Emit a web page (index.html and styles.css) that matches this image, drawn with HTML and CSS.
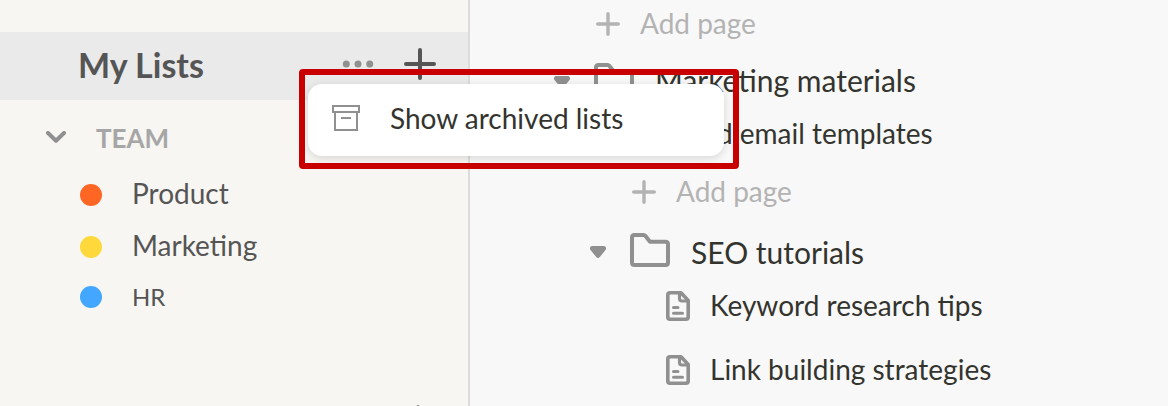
FILE: index.html
```html
<!DOCTYPE html>
<html lang="en">
<head>
<meta charset="utf-8">
<title>My Lists</title>
<link rel="stylesheet" href="styles.css">
</head>
<body>
<svg class="defs" aria-hidden="true">
  <symbol id="plus" viewBox="0 0 24 24"><path d="M12 1.700v20.600M1.700 12h20.600" fill="none" stroke="currentColor" stroke-width="3.400" stroke-linecap="round"/></symbol>
  <symbol id="caret" viewBox="0 0 16 12"><path d="M2.500 0h11A2.400 2.400 0 0 1 15.300 4.200L9.800 11Q8 13 6.200 11L.7 4.200A2.400 2.400 0 0 1 2.500 0z" fill="currentColor"/></symbol>
  <symbol id="folder" viewBox="0 0 40 34"><path d="M4.500 2h9.200q1 0 1.600.8L20 8.700h15.500Q38 8.700 38 11.200V29.500Q38 32 35.500 32h-31Q2 32 2 29.500v-25Q2 2 4.500 2z" fill="none" stroke="currentColor" stroke-width="4" stroke-linejoin="round"/></symbol>
  <symbol id="file" viewBox="0 0 24 30"><path d="M4 1.800h11L22.200 9.500V26q0 2.200-2.200 2.200H4Q1.800 28.200 1.800 26V4Q1.800 1.800 4 1.800z" fill="none" stroke="currentColor" stroke-width="3.600" stroke-linejoin="round"/><path d="M13.500 2v5.500q0 2.500 2.500 2.500h6" fill="none" stroke="currentColor" stroke-width="3.200"/><path d="M7.500 16.500h4.500M7.500 22.300h9" fill="none" stroke="currentColor" stroke-width="3" stroke-linecap="round"/></symbol>
</svg>
<div class="app">
  <aside class="sidebar">
    <header class="lists-header">
      <h1 class="lists-title">My Lists</h1>
      <button class="icon-button" aria-label="List options">
        <svg width="32" height="8" viewBox="0 0 32 8" fill="currentColor"><circle cx="4.300" cy="4" r="3.500"/><circle cx="16" cy="4" r="3.500"/><circle cx="27.700" cy="4" r="3.500"/></svg>
      </button>
      <button class="icon-button icon-button-dark" aria-label="Add list">
        <svg width="32" height="32" viewBox="0 0 32 32"><path d="M16 2v28M2 16h28" stroke="currentColor" stroke-width="4" stroke-linecap="round"/></svg>
      </button>
    </header>
    <button class="team-toggle" aria-expanded="true">
      <svg width="20" height="12" viewBox="0 0 20 12"><path d="M2 2l8 7.700L18 2" fill="none" stroke="currentColor" stroke-width="4" stroke-linecap="round" stroke-linejoin="round"/></svg>
      <span>TEAM</span>
    </button>
    <nav class="lists">
      <a class="list-link" href="#product"><span class="dot dot-orange"></span>Product</a>
      <a class="list-link" href="#marketing"><span class="dot dot-yellow"></span>Marketing</a>
      <a class="list-link list-link-small" href="#hr"><span class="dot dot-blue"></span>HR</a>
    </nav>
    <div class="next-section">
      <button class="icon-button" aria-label="Add item"><svg width="24" height="24"><use href="#plus"/></svg></button>
    </div>
  </aside>

  <main class="tree">
    <button class="row row-add"><svg width="24" height="24"><use href="#plus"/></svg>Add page</button>
    <section class="group">
      <div class="row row-folder row-folder-top">
        <button class="icon-button" aria-label="Collapse Marketing materials"><svg width="16" height="12"><use href="#caret"/></svg></button>
        <svg class="folder" width="40" height="34"><use href="#folder"/></svg>
        <a class="row-link" href="#marketing-materials">Marketing materials</a>
      </div>
      <div class="children">
        <a class="row row-page" href="#email-templates"><svg width="24" height="30"><use href="#file"/></svg>Cold email templates</a>
        <button class="row row-add"><svg width="24" height="24"><use href="#plus"/></svg>Add page</button>
        <section class="group group-nested">
          <div class="row row-folder">
            <button class="icon-button" aria-label="Collapse SEO tutorials"><svg width="16" height="12"><use href="#caret"/></svg></button>
            <svg class="folder" width="40" height="34"><use href="#folder"/></svg>
            <a class="row-link" href="#seo">SEO tutorials</a>
          </div>
          <div class="children">
            <a class="row row-page" href="#keywords"><svg width="24" height="30"><use href="#file"/></svg>Keyword research tips</a>
            <a class="row row-page" href="#links"><svg width="24" height="30"><use href="#file"/></svg>Link building strategies</a>
          </div>
        </section>
      </div>
    </section>
  </main>

  <div class="callout">
    <div class="menu" role="menu">
      <button class="menu-item" role="menuitem">
        <svg width="28" height="26" viewBox="0 0 28 26" fill="none" stroke="currentColor" stroke-width="2"><path d="M1 1h26v6H1zM3 7v18h22V7M9 13h10"/></svg>
        Show archived lists
      </button>
    </div>
  </div>
</div>
</body>
</html>
```
FILE: styles.css
```css
* { box-sizing: border-box; }

body {
  margin: 0;
  font-family: Lato, "Open Sans", sans-serif;
  font-size: 28px;
  line-height: 36px;
  color: #34342f;
  background: #f8f8f8;
}

button {
  padding: 0;
  border: 0;
  background: none;
  font: inherit;
  color: inherit;
  text-align: left;
  cursor: pointer;
}

a { color: inherit; text-decoration: none; }
svg { display: block; flex: none; }
.defs { position: absolute; width: 0; height: 0; }

.app {
  position: relative;
  display: grid;
  grid-template-columns: 470px 1fr;
  height: 100vh;
  overflow: hidden;
}

.sidebar {
  padding-top: 32px;
  overflow: hidden;
  background: #f7f6f2;
  border-right: 2px solid #dcdcdc;
}

.lists-header {
  display: flex;
  align-items: center;
  gap: 30px;
  height: 68px;
  padding: 0 32px 4px 78px;
  background: #eaeaea;
}

.lists-title {
  flex: 1;
  margin: 0;
  padding-top: 2px;
  font-size: 34px;
  line-height: 40px;
  font-weight: 700;
  color: #555;
}

.icon-button { flex: none; color: #909090; }
.icon-button-dark { color: #555; }

.team-toggle {
  display: flex;
  align-items: center;
  gap: 30px;
  width: 100%;
  height: 68px;
  padding: 8px 0 0 46px;
  font-size: 26px;
  font-weight: 700;
  color: #a6a6a6;
}

.team-toggle svg { margin-bottom: 2px; color: #909090; }

.list-link {
  display: flex;
  align-items: center;
  gap: 30px;
  height: 52px;
  padding: 0 0 2px 80px;
  color: #555;
}

.dot { width: 22px; height: 22px; margin-top: 4px; border-radius: 50%; }
.dot-orange { background: #ff6624; }
.dot-yellow { background: #ffd93b; }
.dot-blue { background: #43a6ff; }

.list-link-small { font-size: 24px; }
.list-link-small .dot { margin-top: 0; }

.next-section {
  display: flex;
  justify-content: flex-end;
  padding: 81px 38px 0 0;
}

.tree { padding-left: 126px; color: #34342f; }

.row { display: flex; align-items: center; padding-bottom: 2px; }
.row-add { gap: 20px; height: 48px; color: #b3b3b3; }
.row-page { gap: 20px; height: 64px; }
.row-folder { height: 42px; font-size: 30px; }
.row svg { color: #909090; }
.row-add svg { margin-top: 2px; color: #b3b3b3; }
.row-page svg { margin-top: 2px; }
.row-folder .folder { margin-bottom: 4px; }
.row-folder .icon-button { margin-right: 24px; }
.row-folder-top .folder { margin-bottom: 0; }
.row-folder-top .icon-button { margin-top: 4px; }
.row-link { margin-left: 21px; }

.group { margin: 12px 0 0 -42px; }
.group-nested { margin-top: 16px; }
.children { padding-left: 78px; }
.children .children { padding-left: 76px; }
.children .row-add { margin-top: 2px; }

.callout {
  position: absolute;
  top: 69px;
  left: 299px;
  padding: 9px 9px 7px 3px;
  border: 6px solid #c80000;
  border-radius: 4px;
}

.menu {
  width: 416px;
  border-radius: 14px;
  background: #fff;
  box-shadow: 0 2px 8px rgba(0, 0, 0, 0.14);
}

.menu-item {
  display: flex;
  align-items: center;
  gap: 30px;
  width: 100%;
  height: 72px;
  padding: 0 24px 4px;
}

.menu-item svg { color: #909090; }
```
